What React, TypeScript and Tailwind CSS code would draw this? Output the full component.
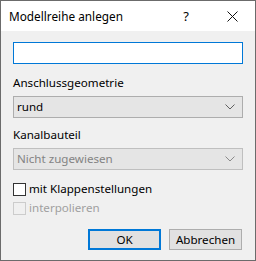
const font = { fontFamily: '"Noto Sans", "Open Sans", sans-serif' };

function Chevron({ color }: { color: string }) {
  return (
    <svg width="10" height="6" viewBox="0 0 10 6" className="shrink-0">
      <path d="M0.5 0.5 L5 5 L9.5 0.5" fill="none" stroke={color} strokeWidth="1" />
    </svg>
  );
}

function Select({ value, disabled }: { value: string; disabled?: boolean }) {
  return (
    <div
      className={
        disabled
          ? "h-[22px] flex items-center justify-between pl-[3px] pr-[7px] bg-[#e5e5e5] border border-[#bfbfbf] text-[#838383]"
          : "h-[22px] flex items-center justify-between pl-[3px] pr-[7px] bg-[#e5e5e5] border border-[#adadad] text-black"
      }
    >
      <span>{value}</span>
      <Chevron color={disabled ? "#8a8a8a" : "#606060"} />
    </div>
  );
}

export default function App() {
  return (
    <div
      className="w-[256px] h-[261px] flex flex-col bg-[#f0f0f0] border border-[#6b6b6b] text-[11.6px] leading-[16px] text-black overflow-hidden"
      style={font}
    >
      <div className="h-[30px] shrink-0 bg-white flex items-center pl-[8px] text-[11.8px]">
        <span className="flex-1">Modellreihe anlegen</span>
        <span className="w-[46px] text-center text-[13px]">?</span>
        <span className="w-[46px] flex justify-center">
          <svg width="11" height="11" viewBox="0 0 11 11">
            <path d="M0.5 0.5 L10.5 10.5 M10.5 0.5 L0.5 10.5" stroke="#111" strokeWidth="1" />
          </svg>
        </span>
      </div>

      <div className="flex flex-col px-[12px] pt-[11px]">
        <div className="h-[22px] bg-white border border-[#0078d7]" />

        <div className="mt-[11px]">Anschlussgeometrie</div>
        <div className="mt-[5px]">
          <Select value="rund" />
        </div>

        <div className="mt-[9px]">Kanalbauteil</div>
        <div className="mt-[5px]">
          <Select value="Nicht zugewiesen" disabled />
        </div>

        <label className="mt-[11px] flex items-center h-[16px]">
          <span className="w-[13px] h-[13px] bg-white border border-[#333333] shrink-0" />
          <span className="ml-[3px]">mit Klappenstellungen</span>
        </label>
        <label className="mt-[3px] flex items-center h-[16px] text-[#a0a0a0]">
          <span className="w-[13px] h-[13px] bg-[#f0f0f0] border border-[#cccccc] shrink-0" />
          <span className="ml-[3px]">interpolieren</span>
        </label>

        <div className="mt-[13px] flex justify-end gap-[8px] pr-[1px]">
          <button className="w-[73px] h-[21px] bg-[#e1e1e1] border-2 border-[#0078d7] flex items-center justify-center">
            OK
          </button>
          <button className="w-[73px] h-[21px] bg-[#e1e1e1] border border-[#adadad] flex items-center justify-center">
            Abbrechen
          </button>
        </div>
      </div>
    </div>
  );
}
